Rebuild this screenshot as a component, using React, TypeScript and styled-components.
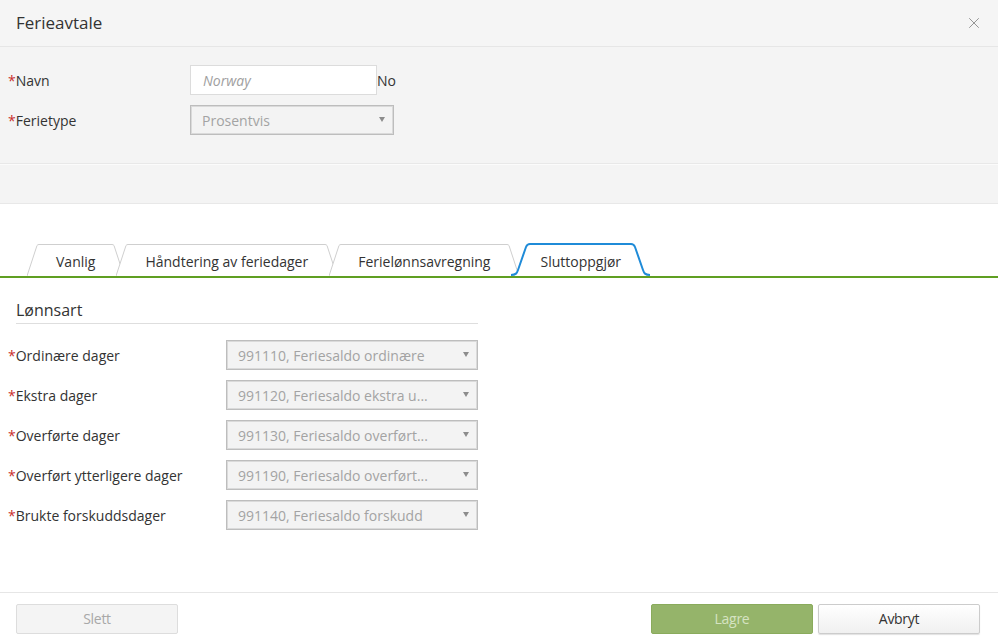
import styled, { createGlobalStyle } from "styled-components";
import { X } from "lucide-react";

const GlobalStyle = createGlobalStyle`
  html, body {
    margin: 0;
    padding: 0;
    background: #ffffff;
    font-family: "Open Sans", "Liberation Sans", sans-serif;
    color: #333333;
  }
`;

const Dialog = styled.div`
  display: flex;
  flex-direction: column;
  height: 644px;
  width: 998px;
  background: #ffffff;
`;

const Header = styled.div`
  display: flex;
  align-items: center;
  justify-content: space-between;
  height: 46px;
  padding: 0 15px 0 16px;
  background: #f5f5f5;
  border-bottom: 1px solid #e6e6e6;
`;

const Title = styled.h1`
  margin: 0 0 1px;
  font-size: 17px;
  font-weight: 400;
  color: #333;
`;

const Close = styled.button`
  display: flex;
  border: 0;
  background: none;
  padding: 0;
  color: #8a8a8a;
  cursor: pointer;
`;

const TopForm = styled.div`
  display: flex;
  flex-direction: column;
  gap: 10px;
  height: 98px;
  padding-top: 18px;
  background: #f4f4f4;
  border-bottom: 1px solid #e8e8e8;
`;

const Band = styled.div`
  height: 38px;
  background: #f4f4f4;
  border-top: 1px solid #fbfbfb;
  border-bottom: 1px solid #e8e8e8;
`;

const Row = styled.div<{ $labelWidth: number }>`
  display: grid;
  grid-template-columns: ${(p) => p.$labelWidth}px auto 1fr;
  align-items: center;
  height: 30px;
  padding-left: 8px;
`;

const Label = styled.label`
  font-size: 14px;
  color: #333;
`;

const Req = styled.span`
  color: #c9302c;
`;

const TextInput = styled.div`
  box-sizing: border-box;
  width: 187px;
  height: 30px;
  display: flex;
  align-items: center;
  padding: 0 12px;
  background: #ffffff;
  border: 1px solid #dcdcdc;
  font-size: 14px;
  font-style: italic;
  color: #a0a0a0;
`;

const After = styled.span`
  font-size: 14px;
  color: #333;
`;

const Select = styled.div<{ $width: number }>`
  box-sizing: border-box;
  position: relative;
  width: ${(p) => p.$width}px;
  height: 30px;
  display: flex;
  align-items: center;
  padding: 0 24px 0 11px;
  background: #f3f3f3;
  border: 1px solid #bdbdbd;
  box-shadow: inset 0 0 0 1px #dadada;
  font-size: 14px;
  color: #a3a3a3;
  white-space: nowrap;

  &::after {
    content: "";
    position: absolute;
    right: 8px;
    top: 11px;
    border-left: 3.5px solid transparent;
    border-right: 3.5px solid transparent;
    border-top: 5px solid #8c8c8c;
  }
`;

const Content = styled.div`
  flex: 1;
  padding-top: 40px;
`;

const TabBar = styled.div`
  display: flex;
  align-items: flex-end;
  height: 32px;
  padding-left: 27px;
  border-bottom: 2px solid #5f9f22;
`;

const Tab = styled.div<{ $active?: boolean }>`
  display: flex;
  align-items: stretch;
  height: ${(p) => (p.$active ? "33px" : "32px")};
  margin-right: -8px;
  position: relative;
  z-index: ${(p) => (p.$active ? 2 : 1)};
`;

const TabLabel = styled.div<{ $active?: boolean }>`
  display: flex;
  align-items: center;
  padding: ${(p) => (p.$active ? "1px 10px 0" : "1px 17px 0")};
  background: #ffffff;
  border-top: ${(p) => (p.$active ? "2px solid #1f8bd8" : "1px solid #cfcfcf")};
  font-size: 14px;
  color: #333;
  white-space: nowrap;
`;

const Section = styled.div`
  padding: 21px 0 0;
`;

const SectionTitle = styled.h2`
  margin: 0 0 0 16px;
  width: 462px;
  padding-bottom: 2px;
  font-size: 16px;
  font-weight: 400;
  color: #333;
  border-bottom: 1px solid #dedede;
`;

const Fields = styled.div`
  display: flex;
  flex-direction: column;
  gap: 10px;
  padding-top: 16px;
`;

const Footer = styled.div`
  display: flex;
  align-items: center;
  gap: 5px;
  height: 51px;
  padding: 0 18px 0 16px;
  border-top: 1px solid #e6e6e6;
`;

const Spacer = styled.div`
  flex: 1;
`;

const Button = styled.button<{ $variant: "disabled" | "primary" | "default" }>`
  box-sizing: border-box;
  width: 162px;
  height: 30px;
  border-radius: 2px;
  font-family: "Open Sans", "Liberation Sans", sans-serif;
  font-size: 14px;
  letter-spacing: -0.3px;
  cursor: pointer;
  border: 1px solid
    ${(p) => (p.$variant === "primary" ? "#8aab5c" : p.$variant === "disabled" ? "#dddddd" : "#cccccc")};
  background: ${(p) =>
    p.$variant === "primary"
      ? "#95b46a"
      : p.$variant === "disabled"
      ? "#f4f4f4"
      : "linear-gradient(#ffffff, #f0f0f0)"};
  color: ${(p) => (p.$variant === "primary" ? "#d5e3c2" : p.$variant === "disabled" ? "#a8a8a8" : "#333333")};
  box-shadow: ${(p) => (p.$variant === "default" ? "0 1px 1px rgba(0,0,0,0.12)" : "none")};
`;

const SlantLeft = ({ active }: { active?: boolean }) =>
  active ? (
    <svg width="19" height="33" viewBox="0 0 19 33">
      <path d="M0 32 C5 32 6 30 7 27 L15 4 C16 1.5 17 1 19 1 L19 33 L0 33 Z" fill="#fff" />
      <path d="M0 32 C5 32 6 30 7 27 L15 4 C16 1.5 17 1 19 1" fill="none" stroke="#1f8bd8" strokeWidth="2" />
    </svg>
  ) : (
    <svg width="12" height="32" viewBox="0 0 12 32">
      <path d="M0 32 L10 1.5 Q10.6 0.5 12 0.5 L12 32 Z" fill="#fff" />
      <path d="M0 32 L10 1.5 Q10.6 0.5 12 0.5" fill="none" stroke="#cfcfcf" strokeWidth="1" />
    </svg>
  );

const SlantRight = ({ active }: { active?: boolean }) =>
  active ? (
    <svg width="19" height="33" viewBox="0 0 19 33">
      <path d="M19 32 C14 32 13 30 12 27 L4 4 C3 1.5 2 1 0 1 L0 33 L19 33 Z" fill="#fff" />
      <path d="M19 32 C14 32 13 30 12 27 L4 4 C3 1.5 2 1 0 1" fill="none" stroke="#1f8bd8" strokeWidth="2" />
    </svg>
  ) : (
    <svg width="12" height="32" viewBox="0 0 12 32">
      <path d="M12 32 L2 1.5 Q1.4 0.5 0 0.5 L0 32 Z" fill="#fff" />
      <path d="M12 32 L2 1.5 Q1.4 0.5 0 0.5" fill="none" stroke="#cfcfcf" strokeWidth="1" />
    </svg>
  );

const tabs = ["Vanlig", "Håndtering av feriedager", "Ferielønnsavregning", "Sluttoppgjør"];
const activeTab = 3;

// values are shown cut off, as the app does
const fields = [
  { label: "Ordinære dager", value: "991110, Feriesaldo ordinære" },
  { label: "Ekstra dager", value: "991120, Feriesaldo ekstra u..." },
  { label: "Overførte dager", value: "991130, Feriesaldo overført..." },
  { label: "Overført ytterligere dager", value: "991190, Feriesaldo overført..." },
  { label: "Brukte forskuddsdager", value: "991140, Feriesaldo forskudd" },
];

const App = () => {
  return (
    <>
      <GlobalStyle />
      <Dialog>
        <Header>
          <Title>Ferieavtale</Title>
          <Close aria-label="Lukk">
            <X size={18} strokeWidth={1.2} />
          </Close>
        </Header>

        <TopForm>
          <Row $labelWidth={182}>
            <Label>
              <Req>*</Req>Navn
            </Label>
            <TextInput>Norway</TextInput>
            <After>No</After>
          </Row>
          <Row $labelWidth={182}>
            <Label>
              <Req>*</Req>Ferietype
            </Label>
            <Select $width={204}>Prosentvis</Select>
          </Row>
        </TopForm>
        <Band />

        <Content>
          <TabBar>
            {tabs.map((t, i) => (
              <Tab key={t} $active={i === activeTab}>
                <SlantLeft active={i === activeTab} />
                <TabLabel $active={i === activeTab}>{t}</TabLabel>
                <SlantRight active={i === activeTab} />
              </Tab>
            ))}
          </TabBar>

          <Section>
            <SectionTitle>Lønnsart</SectionTitle>
            <Fields>
              {fields.map((f) => (
                <Row key={f.label} $labelWidth={218}>
                  <Label>
                    <Req>*</Req>
                    {f.label}
                  </Label>
                  <Select $width={252}>{f.value}</Select>
                </Row>
              ))}
            </Fields>
          </Section>
        </Content>

        <Footer>
          <Button $variant="disabled">Slett</Button>
          <Spacer />
          <Button $variant="primary">Lagre</Button>
          <Button $variant="default">Avbryt</Button>
        </Footer>
      </Dialog>
    </>
  );
};

export default App;
